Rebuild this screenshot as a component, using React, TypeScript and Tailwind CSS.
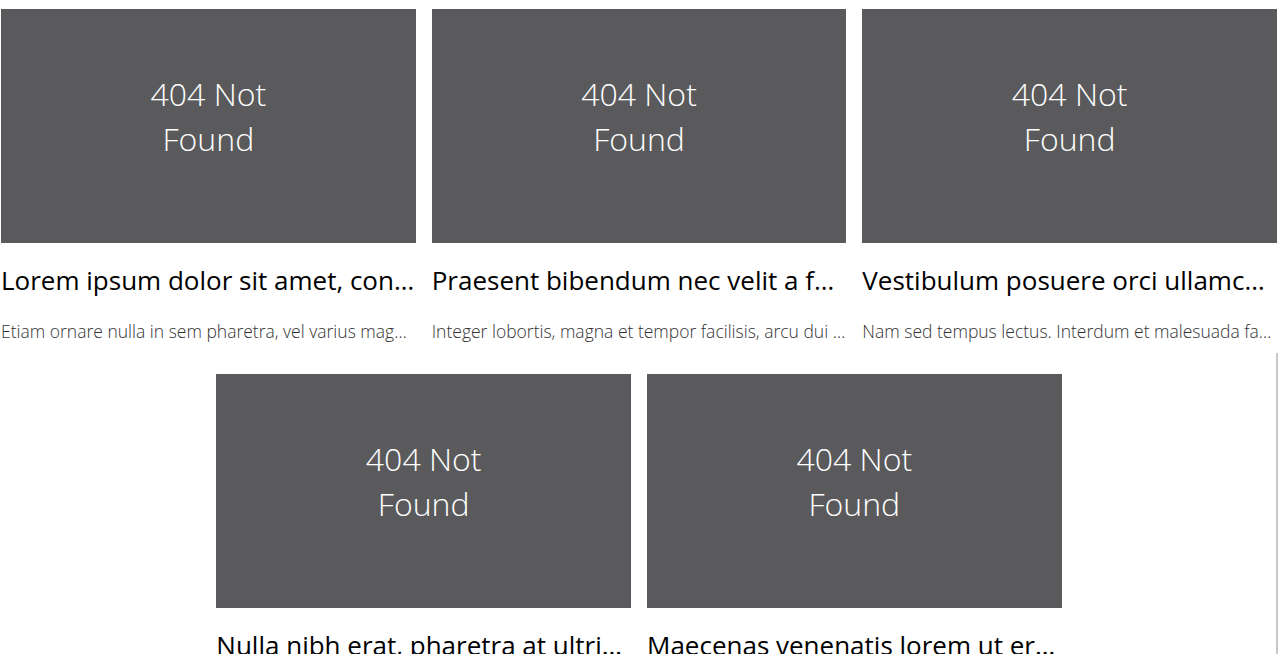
const posts = [
    {
        title: "Lorem ipsum dolor sit amet, consectetur adipiscing elit.",
        text: "Etiam ornare nulla in sem pharetra, vel varius magna tincidunt.",
    },
    {
        title: "Praesent bibendum nec velit a faucibus.",
        text: "Integer lobortis, magna et tempor facilisis, arcu dui luctus nunc.",
    },
    {
        title: "Vestibulum posuere orci ullamcorper lacus.",
        text: "Nam sed tempus lectus. Interdum et malesuada fames ac ante.",
    },
    {
        title: "Nulla nibh erat, pharetra at ultricies sed.",
        text: "Donec a sapien vel quam porttitor aliquet non vel ante.",
    },
    {
        title: "Maecenas venenatis lorem ut erat tempor.",
        text: "Suspendisse potenti. Curabitur quis mi sed mauris rhoncus.",
    },
];

function Card({ title, text }: { title: string; text: string }) {
    return (
        <article className="flex w-[414.67px] flex-col">
            <div className="flex h-[234px] flex-col items-center bg-[#5a5a5c] pt-[62px] text-center text-[32px] font-light leading-[45px] text-white">
                <span>404 Not</span>
                <span>Found</span>
            </div>
            <h2 className="mt-[21px] truncate text-[26px] font-normal leading-[32px] text-black">
                {title}
            </h2>
            <p className="mt-[23px] truncate text-[17.5px] font-light leading-[24px] text-[#333]">
                {text}
            </p>
        </article>
    );
}

export default function App() {
    return (
        <div className="relative h-[654px] overflow-hidden bg-white font-['Open_Sans',sans-serif]">
            <div className="flex w-[1278px] flex-wrap justify-center gap-x-4 gap-y-[31px] pt-[9px]">
                {posts.map((p, idx) => (
                    <Card key={idx} title={p.title} text={p.text} />
                ))}
            </div>
            <div className="absolute right-px top-[353px] h-[301px] w-[2px] bg-[#c8c8c8]"></div>
        </div>
    );
}
